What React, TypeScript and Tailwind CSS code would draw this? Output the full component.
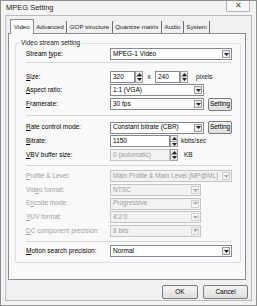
import React from "react"

const font = "font-['Liberation_Sans',Arial,sans-serif]"

function Arrow({ up, disabled }: { up?: boolean; disabled?: boolean }) {
  return (
    <svg width="5" height="3" viewBox="0 0 5 3" className="block">
      <path d={up ? "M0 3 L2.5 0 L5 3 Z" : "M0 0 L5 0 L2.5 3 Z"} fill={disabled ? "#a8a8a8" : "#222"} />
    </svg>
  )
}

function Combo({ value, className, disabled }: { value: string; className: string; disabled?: boolean }) {
  return (
    <div
      className={`flex items-center h-[12px] border pl-[2px] pr-[1px] ${className} ${
        disabled ? "border-[#c4c4c4] bg-[#f2f2f2] text-[#9a9a9a]" : "border-[#828790] bg-white text-black"
      }`}
    >
      <span className="flex-1 truncate leading-none">{value}</span>
      <div
        className={`flex items-center justify-center w-[8px] h-[8px] border ${
          disabled ? "border-[#d0d0d0] bg-[#f4f4f4]" : "border-[#9a9a9a] bg-[#ececec]"
        }`}
      >
        <Arrow disabled={disabled} />
      </div>
    </div>
  )
}

function Spin({ value, className, disabled }: { value: string; className: string; disabled?: boolean }) {
  return (
    <div className={`flex items-center h-[12px] ${className}`}>
      <div
        className={`flex-1 h-full flex items-center border pl-[2px] ${
          disabled ? "border-[#c4c4c4] bg-[#f2f2f2] text-[#9a9a9a]" : "border-[#828790] bg-white text-black"
        }`}
      >
        <span className="leading-none">{value}</span>
      </div>
      <div className="flex flex-col w-[8px] h-full">
        <div className="flex-1 flex items-center justify-center border border-[#a0a0a0] bg-[#ececec]">
          <Arrow up />
        </div>
        <div className="flex-1 flex items-center justify-center border border-t-0 border-[#a0a0a0] bg-[#ececec]">
          <Arrow />
        </div>
      </div>
    </div>
  )
}

function Btn({ label, className }: { label: string; className: string }) {
  return (
    <div
      className={`flex items-center justify-center border border-[#7a7a7a] rounded-[2px] bg-gradient-to-b from-[#f4f4f4] to-[#dedede] text-black leading-none ${className}`}
    >
      {label}
    </div>
  )
}

function Label({ children, disabled }: { children: React.ReactNode; disabled?: boolean }) {
  return (
    <span className={`w-[84px] shrink-0 leading-none ${disabled ? "text-[#a0a0a0]" : "text-black"}`}>{children}</span>
  )
}

function Row({ children }: { children: React.ReactNode }) {
  return <div className="flex items-center h-[13.6px]">{children}</div>
}

function Sep({ className }: { className: string }) {
  return <div className={`mr-[8px] border-t border-[#d5d5d5] ${className}`} />
}

export default function App() {
  const tabs = ["Advanced", "GOP structure", "Quantize matrix", "Audio", "System"]
  return (
    <div className={`w-[257px] h-[306px] flex flex-col border border-[#8f8f8f] bg-[#f3f3f3] px-[4px] pb-[4px] text-[6.5px] text-[#1a1a1a] ${font}`}>
      {/* title bar */}
      <div className="h-[14px] flex items-start justify-between">
        <span className="pl-[1px] pt-[3px] text-[7.5px] leading-none text-[#222]">MPEG Setting</span>
        <div className="mr-[2px] w-[24px] h-[11px] flex items-center justify-center border border-t-0 border-[#b0b0b0] rounded-b-[2px] bg-[#f7f7f7] text-[8px] leading-none text-[#505050]">
          ✕
        </div>
      </div>

      {/* client */}
      <div className="flex-1 flex flex-col border border-[#b9b9b9] bg-[#f0f0f0] pl-[2px] pt-[3px]">
        {/* tabs */}
        <div className="flex items-end h-[14px] pl-[2px] text-[6.2px]">
          <div className="relative z-10 h-[15px] -mb-[1px] flex items-center px-[3px] border border-b-0 border-[#898c95] bg-[#f9f9f9] leading-none">
            Video
          </div>
          {tabs.map((t) => (
            <div key={t} className="h-[12px] flex items-center px-[2.5px] border-r border-[#6f6f6f] leading-none">
              {t}
            </div>
          ))}
        </div>

        {/* panel */}
        <div className="w-[238px] h-[247px] border border-[#898c95] bg-[#f9f9f9] pl-[6px] pt-[6px]">
          <fieldset className="w-[226px] h-[223px] border border-[#d5dfe5] rounded-[2px] pl-[10px]">
            <legend className="-ml-[6px] px-[1px] leading-none">Video stream setting</legend>
            <div className="pt-[1px]">
              <Row>
                <Label>Stream <u>t</u>ype:</Label>
                <Combo value="MPEG-1 Video" className="w-[122px]" />
              </Row>
              <Sep className="mt-[1px] mb-[7px]" />
              <Row>
                <Label><u>S</u>ize:</Label>
                <Spin value="320" className="w-[33px]" />
                <span className="w-[12px] text-center leading-none">x</span>
                <Spin value="240" className="w-[33px]" />
                <span className="ml-[8px] leading-none">pixels</span>
              </Row>
              <Row>
                <Label><u>A</u>spect ratio:</Label>
                <Combo value="1:1 (VGA)" className="w-[94px]" />
              </Row>
              <Row>
                <Label><u>F</u>ramerate:</Label>
                <Combo value="30 fps" className="w-[94px]" />
                <Btn label="Setting" className="ml-[4px] w-[24px] h-[13px]" />
              </Row>
              <Sep className="mt-[4px] mb-[5px]" />
              <Row>
                <Label><u>R</u>ate control mode:</Label>
                <Combo value="Constant bitrate (CBR)" className="w-[94px]" />
                <Btn label="Setting" className="ml-[4px] w-[24px] h-[13px]" />
              </Row>
              <Row>
                <Label><u>B</u>itrate:</Label>
                <Spin value="1150" className="w-[68px]" />
                <span className="ml-[3px] leading-none">kbits/sec</span>
              </Row>
              <Row>
                <Label><u>V</u>BV buffer size:</Label>
                <Spin value="0 (automatic)" className="w-[68px]" disabled />
                <span className="ml-[6px] leading-none">KB</span>
              </Row>
              <Sep className="mt-[3px] mb-[4px]" />
              <Row>
                <Label disabled><u>P</u>rofile &amp; Level:</Label>
                <Combo value="Main Profile & Main Level (MP@ML)" className="w-[122px]" disabled />
              </Row>
              <Row>
                <Label disabled>Vid<u>e</u>o format:</Label>
                <Combo value="NTSC" className="w-[91px]" disabled />
              </Row>
              <Row>
                <Label disabled>E<u>n</u>code mode:</Label>
                <Combo value="Progressive" className="w-[91px]" disabled />
              </Row>
              <Row>
                <Label disabled><u>Y</u>UV format:</Label>
                <Combo value="4:2:0" className="w-[91px]" disabled />
              </Row>
              <Row>
                <Label disabled><u>D</u>C component precision:</Label>
                <Combo value="8 bits" className="w-[91px]" disabled />
              </Row>
              <Sep className="mt-[3px] mb-[3px]" />
              <Row>
                <Label><u>M</u>otion search precision:</Label>
                <Combo value="Normal" className="w-[122px]" />
              </Row>
            </div>
          </fieldset>
        </div>

        {/* buttons */}
        <div className="flex justify-end gap-[5px] pr-[3px] pt-[5px]">
          <Btn label="OK" className="w-[36px] h-[14px]" />
          <Btn label="Cancel" className="w-[45px] h-[14px]" />
        </div>
      </div>
    </div>
  )
}
